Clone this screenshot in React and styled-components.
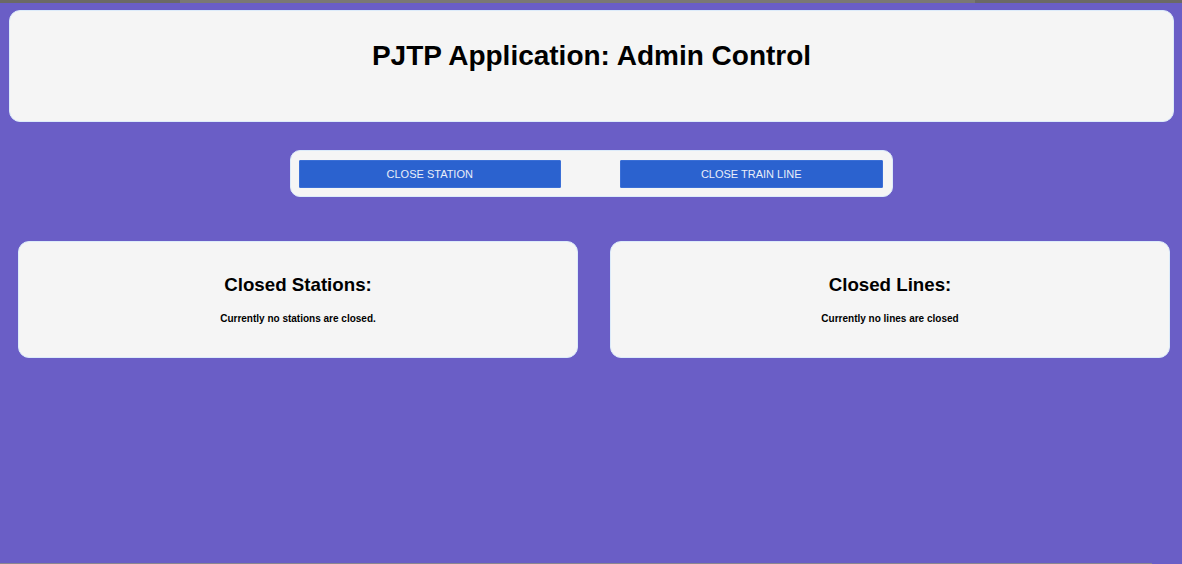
import React from "react";
import styled, { createGlobalStyle } from "styled-components";

const GlobalStyle = createGlobalStyle`
  html, body {
    margin: 0;
    padding: 0;
    background: #6a5ec6;
    font-family: "Liberation Sans", Arial, sans-serif;
  }
`;

const Page = styled.div`
  min-height: 564px;
  display: flex;
  flex-direction: column;
  background: #6a5ec6;
`;

const TopStrip = styled.div`
  height: 3px;
  background: #6b6966;
  display: flex;
`;

const StripThumb = styled.div`
  margin-left: 180px;
  width: 795px;
  background: #7a7874;
`;

const Header = styled.header`
  margin: 7px 8px 0 9px;
  padding: 29px 0 49px;
  background: #f5f5f5;
  border: 1px solid #dcebfa;
  border-radius: 11px;
  text-align: center;
`;

const Title = styled.h1`
  margin: 0;
  font-size: 28px;
  line-height: 32px;
  font-weight: bold;
  color: #000;
`;

const ButtonBar = styled.div`
  align-self: center;
  box-sizing: border-box;
  width: 603px;
  margin-top: 28px;
  display: flex;
  gap: 59px;
  padding: 9px 9px 8px 8px;
  background: #f5f5f5;
  border: 1px solid #dcebfa;
  border-radius: 10px;
`;

const ActionButton = styled.button`
  flex: 1;
  height: 28px;
  padding: 0;
  border: 1px solid #3b6fd6;
  border-radius: 1px;
  background: #2b62cf;
  color: #e9eef9;
  font-family: "Liberation Sans", Arial, sans-serif;
  font-size: 11px;
  text-transform: uppercase;
  cursor: pointer;
`;

const CardRow = styled.div`
  margin-top: 44px;
  display: flex;
  gap: 32px;
  padding: 0 12px 0 18px;
`;

const Card = styled.section`
  flex: 1;
  padding: 32px 0 32px;
  background: #f5f5f5;
  border: 1px solid #dcebfa;
  border-radius: 11px;
  text-align: center;
`;

const CardTitle = styled.h3`
  margin: 0 0 17px;
  font-size: 18.72px;
  line-height: 22px;
  font-weight: bold;
  color: #000;
`;

const CardNote = styled.p`
  margin: 0;
  font-size: 10px;
  line-height: 12px;
  font-weight: bold;
  color: #000;
`;

const Spacer = styled.div`
  flex: 1;
`;

const BottomStrip = styled.div`
  height: 1px;
  margin-right: 30px;
  background: #8a8790;
`;

const closures = [
  { title: "Closed Stations:", empty: "Currently no stations are closed." },
  { title: "Closed Lines:", empty: "Currently no lines are closed" },
];

export default function App() {
  return (
    <Page>
      <GlobalStyle />
      <TopStrip>
        <StripThumb />
      </TopStrip>
      <Header>
        <Title>PJTP Application: Admin Control</Title>
      </Header>
      <ButtonBar>
        <ActionButton>Close Station</ActionButton>
        <ActionButton>Close Train Line</ActionButton>
      </ButtonBar>
      <CardRow>
        {closures.map(c => (
          <Card key={c.title}>
            <CardTitle>{c.title}</CardTitle>
            <CardNote>{c.empty}</CardNote>
          </Card>
        ))}
      </CardRow>
      <Spacer />
      <BottomStrip />
    </Page>
  );
}
